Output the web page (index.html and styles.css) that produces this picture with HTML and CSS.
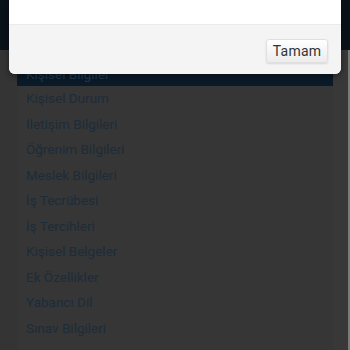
FILE: index.html
```html
<!DOCTYPE html>
<html>
<head>
<meta charset="utf-8">
<link rel="stylesheet" href="styles.css">
</head>
<body>
<div class="page">
  <div class="header"></div>
  <div class="main">
    <ul class="menu">
      <li class="item active">Kişisel Bilgiler</li>
      <li class="item">Kişisel Durum</li>
      <li class="item">İletişim Bilgileri</li>
      <li class="item">Öğrenim Bilgileri</li>
      <li class="item">Meslek Bilgileri</li>
      <li class="item">İş Tecrübesi</li>
      <li class="item">İş Tercihleri</li>
      <li class="item">Kişisel Belgeler</li>
      <li class="item">Ek Özellikler</li>
      <li class="item">Yabancı Dil</li>
      <li class="item">Sınav Bilgileri</li>
    </ul>
    <div class="side"></div>
    <div class="edge"></div>
  </div>
</div>
<div class="modal">
  <div class="modal-body"></div>
  <div class="modal-footer">
    <button class="btn">Tamam</button>
  </div>
</div>
</body>
</html>
```
FILE: styles.css
```css
html, body {
  margin: 0;
  padding: 0;
  width: 350px;
  height: 350px;
  overflow: hidden;
  background: #343434;
  font-family: Roboto, "Noto Sans", sans-serif;
}
.page {
  display: flex;
  flex-direction: column;
  height: 350px;
}
.header {
  height: 50px;
  background: #0a1219;
  flex: none;
}
.main {
  flex: 1;
  display: flex;
  background: #343434;
  padding-left: 17px;
}
.menu {
  list-style: none;
  margin: 12px 0 0 0;
  padding: 0;
  width: 316px;
  background: #363636;
}
.item {
  height: 25.5px;
  line-height: 25.5px;
  padding-left: 9px;
  font-size: 13.5px;
  color: #1d2c3a;
  white-space: nowrap;
}
.item.active {
  background: #0a1a28;
  height: 24px;
  line-height: 24px;
  color: #22384b;
}
.side {
  width: 15px;
  background: #383838;
}
.edge {
  width: 2px;
  background: #7a7a7a;
}
.modal {
  position: fixed;
  left: 9px;
  top: 0;
  width: 332px;
  height: 74px;
  background: #fff;
  border-radius: 0 0 6px 6px;
  overflow: hidden;
  box-shadow: 0 2px 6px rgba(0,0,0,0.4);
  display: flex;
  flex-direction: column;
}
.modal-body {
  height: 24px;
  background: #fff;
  flex: none;
}
.modal-footer {
  flex: 1;
  background: #f4f4f4;
  border-top: 1px solid #ebebeb;
  display: flex;
  justify-content: flex-end;
  align-items: center;
  padding-right: 13px;
}
.btn {
  width: 62px;
  height: 24px;
  margin-top: 2px;
  border: 1px solid #e0e0e0;
  border-radius: 3px;
  background: linear-gradient(#ffffff, #ececec);
  box-shadow: 0 1px 2px rgba(0,0,0,0.12);
  font-family: Roboto, "Noto Sans", sans-serif;
  font-size: 14px;
  letter-spacing: 0.2px;
  color: #333;
  padding: 0;
}
```
